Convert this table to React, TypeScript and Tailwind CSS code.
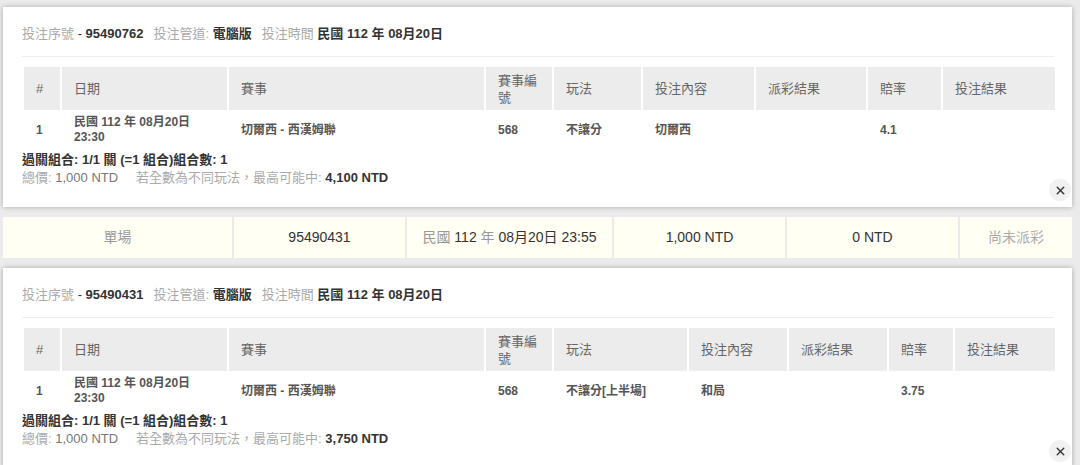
import { X } from "lucide-react";

type Bet = {
  id: string;
  odds: string;
  play: string;
  pick: string;
  maxWin: string;
  widths: string[];
};

const heads = ["#", "日期", "賽事", "賽事編號", "玩法", "投注內容", "派彩結果", "賠率", "投注結果"];

const bets: Bet[] = [
  {
    id: "95490762",
    odds: "4.1",
    play: "不讓分",
    pick: "切爾西",
    maxWin: "4,100 NTD",
    widths: ["w-[36px]", "w-[165px]", "w-[255px]", "w-[66px]", "w-[87px]", "w-[111px]", "w-[110px]", "w-[73px]", "w-[112px]"],
  },
  {
    id: "95490431",
    odds: "3.75",
    play: "不讓分[上半場]",
    pick: "和局",
    maxWin: "3,750 NTD",
    widths: ["w-[36px]", "w-[165px]", "w-[255px]", "w-[66px]", "w-[133px]", "w-[98px]", "w-[98px]", "w-[64px]", "w-[100px]"],
  },
];

function BetCard({ bet }: { bet: Bet }) {
  const cells = ["1", "", "切爾西 - 西漢姆聯", "568", bet.play, bet.pick, "", bet.odds, ""];
  return (
    <div className="relative bg-white pl-[19px] pr-[18px] pt-[20px] pb-[20px] shadow-[0_0_5px_rgba(0,0,0,0.28)]">
      {/* order info line */}
      <div className="text-[13px] leading-[14px] text-[#333] pb-[15px] border-b border-[#eeeeee]">
        <span className="text-[#aaa]">投注序號</span> - <b>{bet.id}</b>
        <span className="ml-[10px] text-[#aaa]">投注管道:</span> <b>電腦版</b>
        <span className="ml-[10px] text-[#aaa]">投注時間</span> <b>民國 112 年 08月20日</b>
      </div>

      <table className="mt-[8px] w-[1035px] table-fixed border-separate border-spacing-[2px] text-[13px]">
        <thead>
          <tr>
            {heads.map((h, i) => (
              <th
                key={h}
                className={`${bet.widths[i]} h-[43px] bg-[#ececec] pl-3 pr-2 text-left align-middle font-normal leading-[17px] text-[#666]`}
              >
                {h}
              </th>
            ))}
          </tr>
        </thead>
        <tbody>
          <tr>
            {cells.map((c, i) => (
              <td key={i} className="py-[3px] pl-3 pr-2 align-middle text-[12px] font-bold leading-[15px] text-[#555]">
                {i === 1 ? (
                  <>
                    民國 112 年 08月20日
                    <br />
                    23:30
                  </>
                ) : (
                  c
                )}
              </td>
            ))}
          </tr>
        </tbody>
      </table>

      <div className="mt-[1px] text-[13px] leading-[18px]">
        <div className="font-bold text-[#333]">過關組合: 1/1 關 (=1 組合)組合數: 1</div>
        <div className="text-[#aaa]">
          總價: <span className="text-[#777]">1,000 NTD</span>
          <span className="ml-[18px]">若全數為不同玩法，最高可能中: </span>
          <b className="text-[#333]">{bet.maxWin}</b>
        </div>
      </div>

      <button className="absolute right-[1px] bottom-[6px] flex h-[22px] w-[22px] items-center justify-center rounded-full bg-[#f1f1f1] text-[#333]">
        <X size={13} strokeWidth={2.6} />
      </button>
    </div>
  );
}

function SummaryRow() {
  return (
    <div className="flex gap-[2px] text-[14px] leading-[41px] text-center">
      <div className="w-[229px] bg-[#fffff4] text-[#999]">單場</div>
      <div className="w-[171px] bg-[#fffff4] text-[#333]">95490431</div>
      <div className="w-[205px] bg-[#fffff4] text-[#333]">
        <span className="text-[#999]">民國</span> 112 <span className="text-[#999]">年</span> 08月20日 23:55
      </div>
      <div className="w-[171px] bg-[#fffff4] text-[#333]">1,000 NTD</div>
      <div className="w-[171px] bg-[#fffff4] text-[#333]">0 NTD</div>
      <div className="w-[112px] bg-[#fffff4] text-[#aaa]">尚未派彩</div>
    </div>
  );
}

export default function App() {
  return (
    <div className="h-[465px] overflow-hidden bg-[#ebebeb] pl-[3px] pr-[8px] pt-[7px] font-['Liberation_Sans','Noto_Sans_CJK_TC',sans-serif]">
      <div className="flex flex-col">
        <BetCard bet={bets[0]} />
        <div className="mt-[10px] mb-[10px]">
          <SummaryRow />
        </div>
        <BetCard bet={bets[1]} />
      </div>
    </div>
  );
}
